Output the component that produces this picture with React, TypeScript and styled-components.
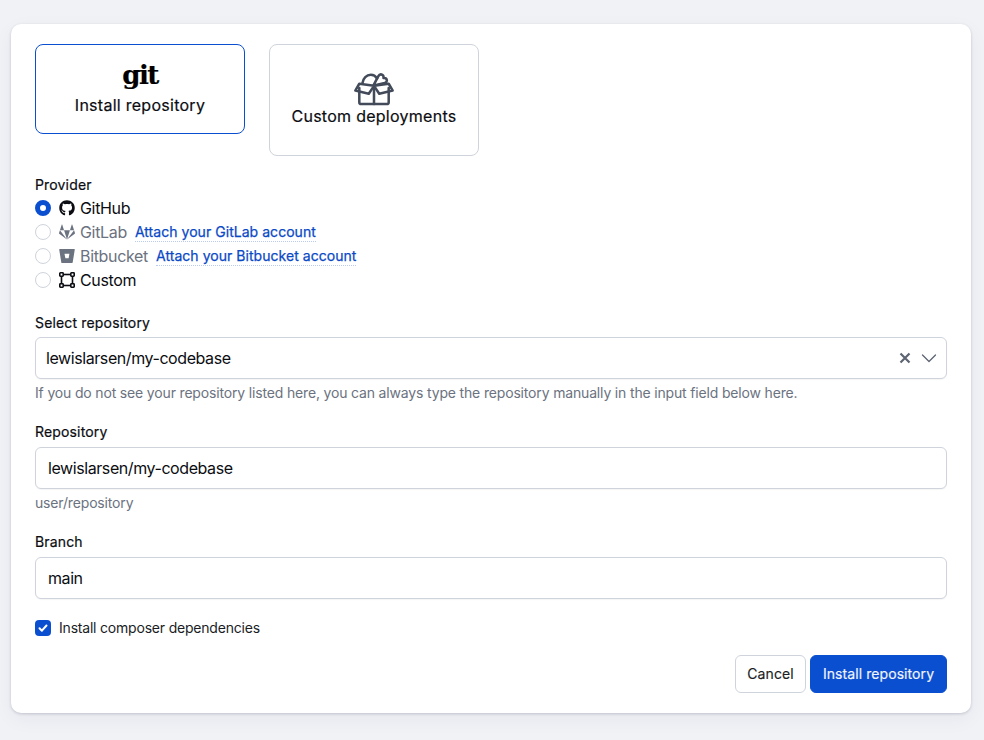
import React from "react";
import styled, { createGlobalStyle } from "styled-components";
import { FaGithub, FaGitlab, FaBitbucket } from "react-icons/fa";

const Global = createGlobalStyle`
  html, body { margin: 0; padding: 0; background: #f1f2f6; }
  body { font-family: Inter, "Liberation Sans", sans-serif; color: #0b0d12; -webkit-font-smoothing: antialiased; }
  * { box-sizing: border-box; }
`;

const Page = styled.div`
  width: 984px;
  height: 740px;
  padding: 24px 13px 0 11px;
  overflow: hidden;
`;
const Card = styled.form`
  height: 689px;
  background: #fff;
  border-radius: 10px;
  box-shadow: 0 1px 3px rgba(30, 40, 70, 0.2), 0 6px 20px rgba(30, 40, 70, 0.05);
  padding: 20px 24px 20px;
  display: flex;
  flex-direction: column;
`;
const Tiles = styled.div`
  display: flex;
  align-items: flex-start;
  gap: 24px;
  margin-bottom: 19px;
`;
const Tile = styled.button<{ $active?: boolean; $h: number }>`
  width: 210px;
  height: ${(p) => p.$h}px;
  background: #fff;
  border: 1px solid ${(p) => (p.$active ? "#0b4fd1" : "#cfd3dc")};
  border-radius: 8px;
  font: 400 16px/24px Inter, sans-serif;
  letter-spacing: 0.27px;
  -webkit-text-stroke: 0.2px currentColor;
  color: #0b0d12;
  display: flex;
  flex-direction: column;
  align-items: center;
  justify-content: center;
  padding: 0;
`;
const GitMark = styled.span`
  font: 700 26px/26px "DejaVu Serif", serif;
  color: #000;
  letter-spacing: -1.6px;
  height: 32px;
  padding-top: 1px;
`;
const TileIcon = styled.svg`
  display: block;
  margin-bottom: -2px;
`;
const Label = styled.div`
  font: 400 14px/20px Inter, sans-serif;
  color: #0b0d12;
  letter-spacing: 0.16px;
  -webkit-text-stroke: 0.2px currentColor;
`;
const ProviderList = styled.div`
  display: flex;
  flex-direction: column;
  margin: 1px 0 21px;
`;
const ProviderRow = styled.label<{ $off?: boolean }>`
  height: 24px;
  display: flex;
  align-items: center;
  font: 400 16px/24px Inter, sans-serif;
  letter-spacing: -0.33px;
  color: ${(p) => (p.$off ? "#6b7280" : "#0b0d12")};
`;
const Radio = styled.span<{ $on?: boolean }>`
  width: 16px;
  height: 16px;
  border-radius: 50%;
  margin-right: 8px;
  flex: none;
  background: #fff;
  border: ${(p) => (p.$on ? "5px solid #0b4fd1" : "1px solid #cfd3dc")};
`;
const IconSlot = styled.span<{ $off?: boolean }>`
  width: 16px;
  height: 16px;
  margin-right: 5px;
  display: flex;
  align-items: center;
  justify-content: center;
  color: ${(p) => (p.$off ? "#6b7280" : "#0b0d12")};
  svg { display: block; }
`;
const Attach = styled.a`
  font: 400 14px/18px Inter, sans-serif;
  letter-spacing: 0.04px;
  -webkit-text-stroke: 0.25px currentColor;
  color: #0a49c6;
  margin-left: 8px;
  border-bottom: 1px dotted #b9cbf0;
`;
const Field = styled.div`
  display: flex;
  align-items: center;
  height: 42px;
  margin-top: 4px;
  border: 1px solid #cfd3dc;
  border-radius: 6px;
  background: #fff;
  box-shadow: 0 1px 1px rgba(20, 30, 60, 0.04);
  font: 400 16px/24px Inter, sans-serif;
  letter-spacing: -0.42px;
  color: #0b0d12;
`;
const SelectField = styled(Field)`
  padding: 0 9px 0 10px;
  justify-content: space-between;
`;
const Input = styled.input`
  width: 100%;
  height: 42px;
  margin-top: 5px;
  display: block;
  border: 1px solid #cfd3dc;
  border-radius: 6px;
  background: #fff;
  box-shadow: 0 1px 1px rgba(20, 30, 60, 0.04);
  padding: 0 12px;
  font: 400 16px/24px Inter, sans-serif;
  letter-spacing: -0.42px;
  color: #0b0d12;
  outline: none;
`;
const SelectIcons = styled.span`
  display: flex;
  align-items: center;
  gap: 8px;
  color: #5d6472;
`;
const Help = styled.div`
  font: 400 14px/20px Inter, sans-serif;
  letter-spacing: -0.165px;
  color: #6b7280;
  margin-top: 4px;
`;
const Group = styled.div`
  margin-bottom: 19px;
`;
const CheckRow = styled.label`
  display: flex;
  align-items: center;
  gap: 8px;
  font: 400 14px/20px Inter, sans-serif;
  letter-spacing: -0.2px;
  color: #1a1d24;
`;
const Check = styled.span`
  width: 16px;
  height: 16px;
  border-radius: 4px;
  background: #0b4fd1;
  display: flex;
  align-items: center;
  justify-content: center;
`;
const Actions = styled.div`
  margin-top: auto;
  display: flex;
  justify-content: flex-end;
  gap: 4px;
`;
const Button = styled.button<{ $primary?: boolean }>`
  height: 38px;
  width: ${(p) => (p.$primary ? 137 : 71)}px;
  padding: 0;
  border-radius: 6px;
  font: 400 14px/20px Inter, sans-serif;
  letter-spacing: 0.08px;
  -webkit-text-stroke: 0.15px currentColor;
  border: 1px solid ${(p) => (p.$primary ? "#0b4fd1" : "#cfd3dc")};
  background: ${(p) => (p.$primary ? "#0b4fd1" : "#fff")};
  color: ${(p) => (p.$primary ? "#f2f5fd" : "#1a1d24")};
`;

const BoxIcon = () => (
  <TileIcon width="42" height="34" viewBox="0 0 40 32" fill="none" stroke="#434a59" strokeWidth="2.4" strokeLinejoin="round" strokeLinecap="round">
    <path d="M6 15v13.5c0 1 .8 1.8 1.8 1.8h24.4c1 0 1.8-.8 1.8-1.8V15" />
    <path d="M20 13v17.3" />
    <path d="M6 11l14 2-5 7.500L2.200 17.500 6 11z" />
    <path d="M34 11l-14 2 5 7.500 12.800-3L34 11z" />
    <path d="M9 10.500C9.500 5.500 13 2.500 17 2.500c2.500 0 4.500 1.200 6 3.500" />
    <path d="M19.500 12.500 24 4c1-1.800 2.500-2.300 4-1.500 1 .6 1.300 1.700 1 3 1.800-.2 3 .6 3.200 2 .2 1.300-.6 2.300-2 2.800L21 12.500" />
  </TileIcon>
);

const CustomIcon = () => (
  <svg width="16" height="16" viewBox="0 0 16 16" fill="none" stroke="#0b0d12" strokeWidth="1.6">
    <rect x="2.500" y="2.500" width="11" height="11" />
    <rect x="0.800" y="0.800" width="3.400" height="3.400" rx="0.600" fill="#fff" />
    <rect x="11.800" y="0.800" width="3.400" height="3.400" rx="0.600" fill="#fff" />
    <rect x="0.800" y="11.800" width="3.400" height="3.400" rx="0.600" fill="#fff" />
    <rect x="11.800" y="11.800" width="3.400" height="3.400" rx="0.600" fill="#fff" />
  </svg>
);

const ClearIcon = () => (
  <svg width="16" height="16" viewBox="0 0 16 16" fill="none" stroke="currentColor" strokeWidth="2.200">
    <path d="M3.500 3.500l9 9M12.500 3.500l-9 9" />
  </svg>
);

const ChevronIcon = () => (
  <svg width="16" height="16" viewBox="0 0 16 16" fill="none" stroke="currentColor" strokeWidth="1.300" strokeLinecap="round" strokeLinejoin="round">
    <path d="M1.500 5l6.500 6.500L14.500 5" />
  </svg>
);

const CheckIcon = () => (
  <svg width="12" height="12" viewBox="0 0 12 12" fill="none" stroke="#fff" strokeWidth="2" strokeLinecap="round" strokeLinejoin="round">
    <path d="M2.500 6.300l2.400 2.400 4.600-5.200" />
  </svg>
);

export default function App() {
  return (
    <Page>
      <Global />
      <Card>
        <Tiles>
          <Tile type="button" $active $h={90}>
            <GitMark>git</GitMark>
            Install repository
          </Tile>
          <Tile type="button" $h={112}>
            <BoxIcon />
            Custom deployments
          </Tile>
        </Tiles>

        <Label>Provider</Label>
        <ProviderList>
          <ProviderRow>
            <Radio $on />
            <IconSlot><FaGithub size={16} /></IconSlot>
            GitHub
          </ProviderRow>
          <ProviderRow $off>
            <Radio />
            <IconSlot $off><FaGitlab size={16} /></IconSlot>
            GitLab
            <Attach>Attach your GitLab account</Attach>
          </ProviderRow>
          <ProviderRow $off>
            <Radio />
            <IconSlot $off><FaBitbucket size={16} /></IconSlot>
            Bitbucket
            <Attach>Attach your Bitbucket account</Attach>
          </ProviderRow>
          <ProviderRow>
            <Radio />
            <IconSlot><CustomIcon /></IconSlot>
            Custom
          </ProviderRow>
        </ProviderList>

        <Group>
          <Label>Select repository</Label>
          <SelectField>
            lewislarsen/my-codebase
            <SelectIcons>
              <ClearIcon />
              <ChevronIcon />
            </SelectIcons>
          </SelectField>
          <Help>If you do not see your repository listed here, you can always type the repository manually in the input field below here.</Help>
        </Group>

        <Group>
          <Label>Repository</Label>
          <Input readOnly value="lewislarsen/my-codebase" />
          <Help>user/repository</Help>
        </Group>

        <Group>
          <Label>Branch</Label>
          <Input readOnly value="main" />
        </Group>

        <CheckRow>
          <Check><CheckIcon /></Check>
          Install composer dependencies
        </CheckRow>

        <Actions>
          <Button type="button">Cancel</Button>
          <Button type="button" $primary>Install repository</Button>
        </Actions>
      </Card>
    </Page>
  );
}
